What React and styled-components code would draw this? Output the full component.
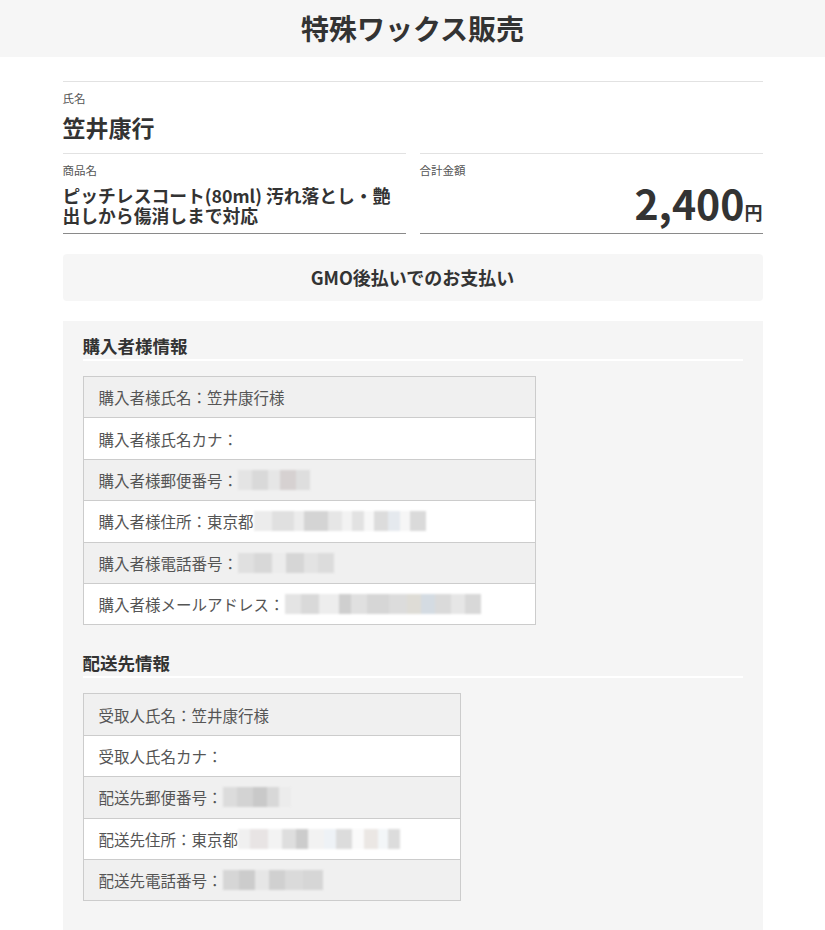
import React from "react";
import styled, { createGlobalStyle } from "styled-components";

const GlobalStyle = createGlobalStyle`
  * { box-sizing: border-box; }
  body {
    margin: 0;
    background: #fff;
    color: #333;
    font-family: "Noto Sans CJK JP", "Noto Sans", sans-serif;
    text-spacing-trim: space-all;
  }
`;

const buyer = [
  { label: "購入者様氏名：", value: "笠井康行様" },
  { label: "購入者様氏名カナ：" },
  { label: "購入者様郵便番号：", mosaic: [["#e4e4e4", 14], ["#d9d9d9", 16], ["#e6e6e6", 12], ["#d6d1d1", 16], ["#dedede", 14]] },
  {
    label: "購入者様住所：東京都",
    mosaic: [
      ["#ececec", 18], ["#e0e0e0", 22], ["#ececec", 10], ["#d4d4d4", 24], ["#e6e6e6", 14],
      ["#f2f2f2", 10], ["#e2e2e2", 12], ["#f7f7f7", 10], ["#dcdcdc", 14], ["#e5e9ee", 12], ["#f6f6f6", 10], ["#dadada", 16],
    ],
  },
  { label: "購入者様電話番号：", mosaic: [["#e0e0e0", 16], ["#d8d8d8", 18], ["#ececec", 14], ["#d6d6d6", 18], ["#e3e3e3", 14], ["#dcdcdc", 16]] },
  {
    label: "購入者様メールアドレス：",
    mosaic: [
      ["#e4e4e4", 16], ["#d9d9d9", 18], ["#ededed", 20], ["#cfcfcf", 12], ["#e0e0e0", 16], ["#d6d6d6", 22],
      ["#dcdcdc", 18], ["#dedcd6", 14], ["#d4dbe2", 14], ["#dadada", 16], ["#e6e6e6", 14], ["#d8d8d8", 16],
    ],
  },
];

const receiver = [
  { label: "受取人氏名：", value: "笠井康行様" },
  { label: "受取人氏名カナ：" },
  { label: "配送先郵便番号：", mosaic: [["#dcdcdc", 14], ["#d3d3d3", 16], ["#c9c9c9", 14], ["#d8d8d8", 12], ["#ececec", 12]] },
  {
    label: "配送先住所：東京都",
    mosaic: [
      ["#f0f0f0", 12], ["#e8e4e4", 18], ["#f3f3f3", 14], ["#dedede", 14], ["#cccccc", 12], ["#f2f2f2", 16],
      ["#eef2f6", 12], ["#dcdcdc", 16], ["#fafafa", 12], ["#ebe7e4", 14], ["#f3f6f8", 10], ["#dcdcdc", 12],
    ],
  },
  { label: "配送先電話番号：", mosaic: [["#d6d6d6", 16], ["#cccccc", 16], ["#e6e6e6", 14], ["#d0d0d0", 16], ["#dadada", 18], ["#d6d6d6", 20]] },
];

function Mosaic({ cells }) {
  return (
    <MosaicStrip>
      {cells.map(([color, width], i) => (
        <MosaicCell key={i} style={{ background: color, width }} />
      ))}
    </MosaicStrip>
  );
}

function InfoTable({ rows, width }) {
  return (
    <Table $width={width}>
      {rows.map((row, i) => (
        <Row key={i} $shaded={i % 2 === 0}>
          {row.label}
          {row.value}
          {row.mosaic && <Mosaic cells={row.mosaic} />}
        </Row>
      ))}
    </Table>
  );
}

export default function App() {
  return (
    <>
      <GlobalStyle />
      <Header>特殊ワックス販売</Header>
      <Main>
        <Fields>
          <Field $wide>
            <Label>氏名</Label>
            <NameValue>笠井康行</NameValue>
          </Field>
          <Field $underline>
            <Label>商品名</Label>
            <ProductValue>ピッチレスコート(80ml) 汚れ落とし・艶出しから傷消しまで対応</ProductValue>
          </Field>
          <Field $underline>
            <Label>合計金額</Label>
            <Amount>
              2,400<Yen>円</Yen>
            </Amount>
          </Field>
        </Fields>

        <PayBox>GMO後払いでのお支払い</PayBox>

        <Panel>
          <SectionTitle>購入者様情報</SectionTitle>
          <InfoTable rows={buyer} width={453} />
          <SectionTitle $spaced>配送先情報</SectionTitle>
          <InfoTable rows={receiver} width={378} />
        </Panel>
      </Main>
    </>
  );
}

const Header = styled.header`
  height: 57px;
  background: #f6f6f6;
  text-align: center;
  font-size: 28px;
  font-weight: 700;
  line-height: 57px;
  color: #333;
`;

const Main = styled.main`
  width: 700px;
  margin: 24px auto 0;
`;

const Fields = styled.div`
  display: grid;
  grid-template-columns: 343px 343px;
  column-gap: 14px;
`;

const Field = styled.div`
  grid-column: ${(p) => (p.$wide ? "1 / -1" : "auto")};
  display: flex;
  flex-direction: column;
  border-top: 1px solid #e2e2e2;
  border-bottom: ${(p) => (p.$underline ? "1px solid #8a8a8a" : "none")};
  padding: 7px 0 ${(p) => (p.$underline ? "8px" : "9px")};
`;

const Label = styled.div`
  font-size: 11.5px;
  line-height: 18px;
  color: #555;
`;

const NameValue = styled.div`
  margin-top: 3px;
  font-size: 23px;
  font-weight: 700;
  line-height: 34px;
  color: #333;
`;

const ProductValue = styled.div`
  margin-top: 6px;
  padding-right: 8px;
  font-size: 17.8px;
  font-weight: 700;
  line-height: 20px;
  color: #333;
`;

const Amount = styled.div`
  margin-top: auto;
  margin-bottom: -8px;
  align-self: flex-end;
  font-size: 41px;
  font-weight: 700;
  line-height: 41px;
  color: #333;
`;

const Yen = styled.span`
  font-size: 18px;
  font-weight: 700;
`;

const PayBox = styled.div`
  margin-top: 20px;
  height: 47px;
  border-radius: 4px;
  background: #f6f6f6;
  text-align: center;
  line-height: 47px;
  font-size: 18px;
  font-weight: 700;
  color: #333;
`;

const Panel = styled.section`
  margin-top: 20px;
  padding: 12px 20px 40px;
  background: #f5f5f5;
`;

const SectionTitle = styled.h2`
  margin: ${(p) => (p.$spaced ? "25px" : "0")} 0 15px;
  font-size: 17.5px;
  font-weight: 700;
  line-height: 26px;
  color: #333;
  border-bottom: 2px solid #fff;
`;

const Table = styled.div`
  width: ${(p) => p.$width}px;
  border: 1px solid #cccccc;
  border-bottom: none;
`;

const Row = styled.div`
  display: flex;
  align-items: center;
  height: 41.4px;
  padding-left: 15px;
  background: ${(p) => (p.$shaded ? "#f0f0f0" : "#ffffff")};
  border-bottom: 1px solid #cccccc;
  font-size: 15.5px;
  font-variant-east-asian: full-width;
  color: #555;
  white-space: nowrap;
`;

const MosaicStrip = styled.span`
  display: inline-flex;
  height: 20px;
  filter: blur(0.8px);
`;

const MosaicCell = styled.span`
  display: inline-block;
  height: 100%;
`;
